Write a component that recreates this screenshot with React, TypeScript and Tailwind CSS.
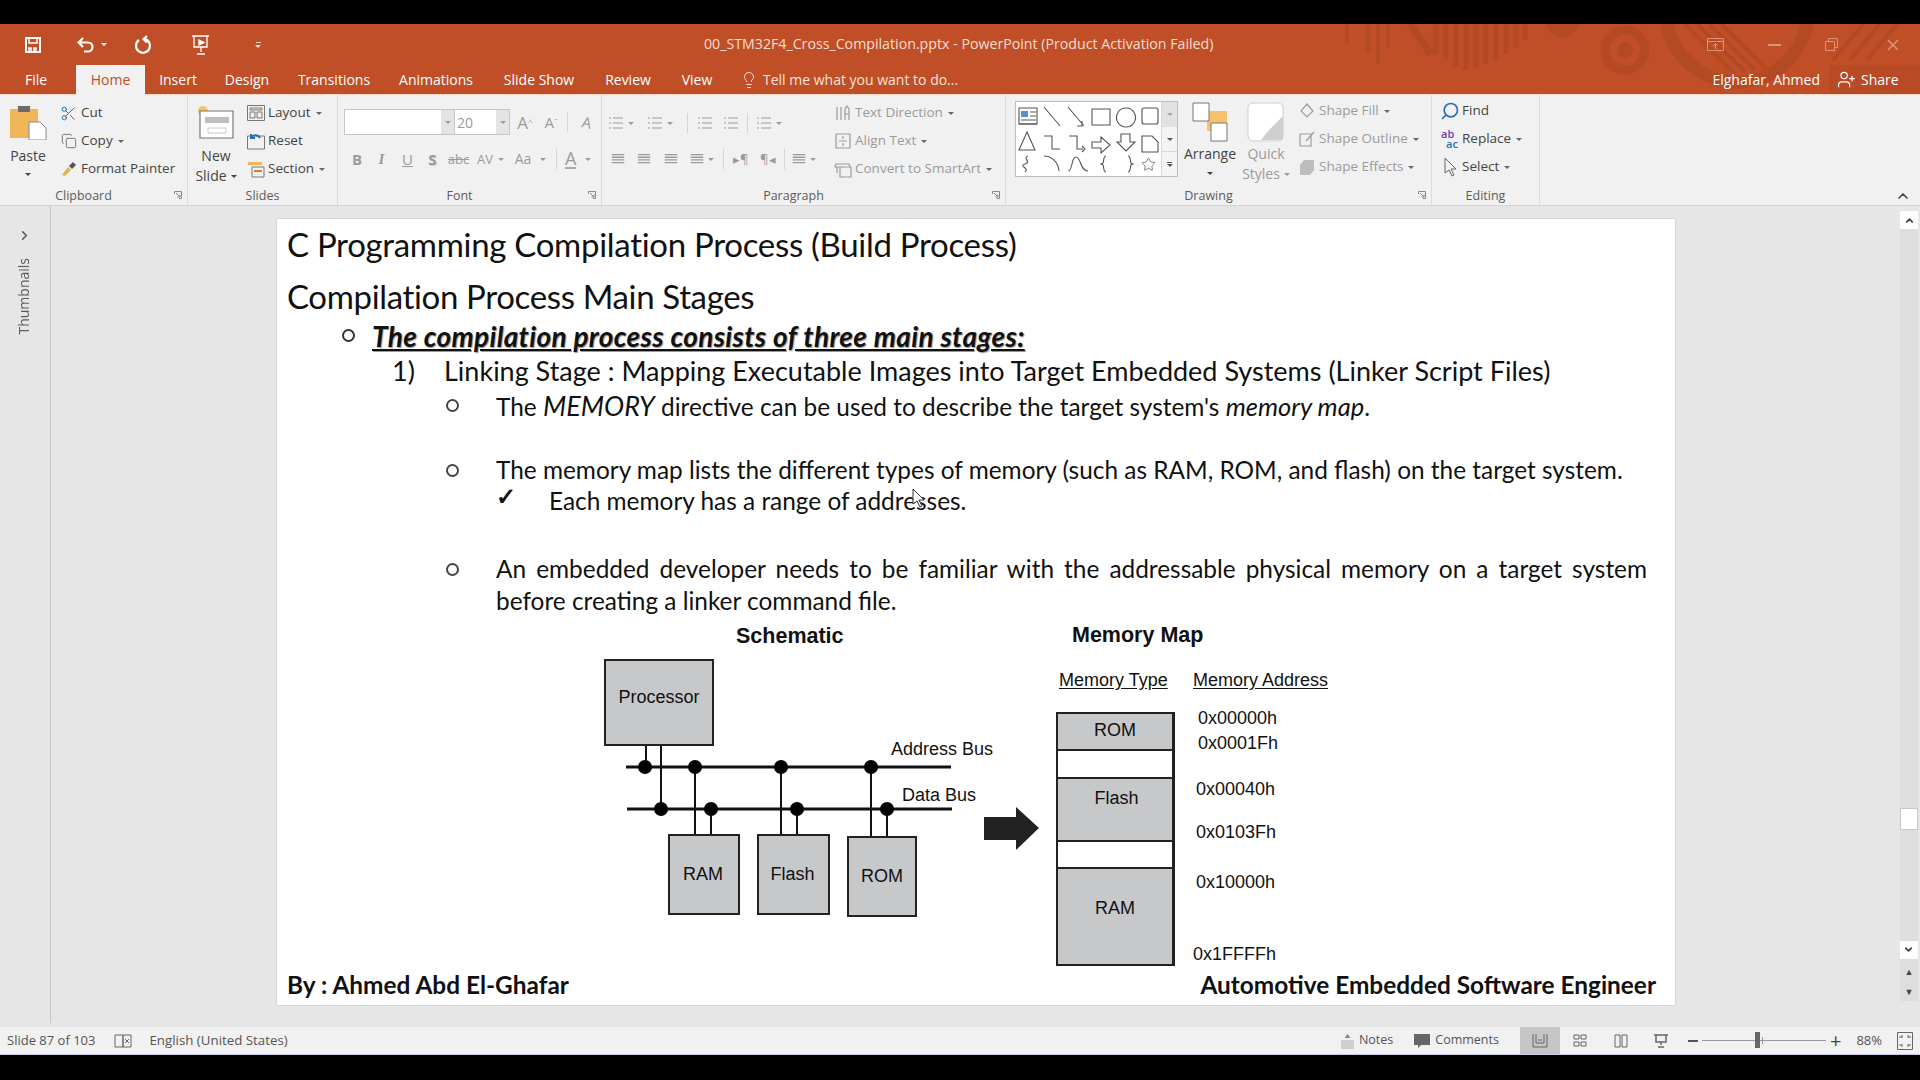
import { ChevronRight, ChevronUp, Copy, Lightbulb, Scissors, Search, Star, UserPlus, X } from 'lucide-react';
import type { ReactNode } from 'react';

function Caret({ className = '' }: { className?: string }) {
  return <span className={`inline-block w-0 h-0 border-x-[3px] border-x-transparent border-t-[3px] border-t-current ${className}`} />;
}

function Launcher() {
  return (
    <svg width="8" height="8" viewBox="0 0 8 8" fill="none" stroke="#8a8a8a" className="absolute right-[5px] bottom-[6px]">
      <path d="M.5 3V.5H7.500V7.500H5M2 2l4 4M6 3.500V6H3.500" />
    </svg>
  );
}

function Group({ w, label, launcher, children }: { w: string; label: string; launcher?: boolean; children: ReactNode }) {
  return (
    <div className={`${w} relative flex flex-col h-full border-r border-[#dcdcdc] shrink-0`}>
      <div className="flex-1 flex min-h-0">{children}</div>
      <div className={`h-[21px] pt-[4px] flex items-center justify-center text-[#5c5c5c] text-[12.500px] leading-none ${launcher ? 'pr-[20px]' : ''}`}>{label}</div>
      {launcher && <Launcher />}
    </div>
  );
}

function SmallRow({ icon, text, dim, caret }: { icon: ReactNode; text: string; dim?: boolean; caret?: boolean }) {
  return (
    <div className={`h-[28px] flex items-center whitespace-nowrap text-[13.500px] leading-none ${dim ? 'text-[#9b9b9b]' : 'text-[#444]'}`}>
      <span className="w-[25px] flex justify-center shrink-0">{icon}</span>
      <span>{text}</span>
      {caret && <Caret className="ml-[5px] text-[#666]" />}
    </div>
  );
}

function Stroke({ children, size = 18, c = '#9b9b9b' }: { children: ReactNode; size?: number; c?: string }) {
  return (
    <svg width={size} height={size} viewBox="0 0 18 18" fill="none" stroke={c} strokeWidth="1.200">
      {children}
    </svg>
  );
}

function TitleBar() {
  return (
    <div className="relative h-[41px] flex items-center">
      <div className="relative ml-[24px] flex items-center text-white">
        <svg width="18" height="18" viewBox="0 0 18 18" fill="none" stroke="white" strokeWidth="2">
          <path d="M2 2h14v14H2z" />
          <path d="M5 2v5h8V2M5 16v-4h2v4M10 16v-4h2v4" strokeWidth="1.500" />
        </svg>
        <svg width="20" height="20" viewBox="0 0 20 20" fill="none" stroke="white" strokeWidth="2.200" className="ml-[34px]">
          <path d="M7 3L2.500 7.500 7 12M3 7.500h9a4.500 4.500 0 0 1 0 9H8" />
        </svg>
        <Caret className="ml-[5px]" />
        <svg width="20" height="20" viewBox="0 0 20 20" fill="none" stroke="white" strokeWidth="2.200" className="ml-[26px]">
          <path d="M6 5a7 7 0 1 0 5-1.200M14 1l-3.500 3L14 7.500" />
        </svg>
        <svg width="22" height="22" viewBox="0 0 22 22" fill="none" stroke="white" strokeWidth="1.300" className="ml-[37px]">
          <path d="M2 2h17M4 2v11h13V2M11 13v5M7 20h8" />
          <path d="M9 6v5l5-2.500z" fill="white" />
        </svg>
        <span className="ml-[43px] flex flex-col items-center opacity-80">
          <span className="w-[5px] h-px bg-white" />
          <Caret className="mt-[2px]" />
        </span>
      </div>
      <div className="absolute left-[704px] top-[13px] text-[14.200px] leading-none text-[#f6ddd2] whitespace-nowrap">
        00_STM32F4_Cross_Compilation.pptx - PowerPoint (Product Activation Failed)
      </div>
      <div className="absolute right-0 top-0 h-full flex items-center opacity-50 text-[#f5d9cc]">
        <svg width="17" height="13" viewBox="0 0 17 13" fill="none" stroke="currentColor" className="mr-[44px]">
          <path d="M.5.500h16v12H.5zM.5 3.500h16M8.500 11V6M6 8l2.500-2.500L11 8" />
        </svg>
        <span className="w-[13px] h-[2px] bg-current mr-[44px]" />
        <svg width="13" height="13" viewBox="0 0 13 13" fill="none" stroke="currentColor" className="mr-[46px]">
          <path d="M.5 3.500h9v9h-9zM3.500 3.500v-3h9v9h-3" />
        </svg>
        <X size={18} className="mr-[18px]" />
      </div>
    </div>
  );
}

function Tabs() {
  const tabs: [string, string][] = [
    ['Insert', 'w-[66px]'],
    ['Design', 'w-[72px]'],
    ['Transitions', 'w-[102px]'],
    ['Animations', 'w-[102px]'],
    ['Slide Show', 'w-[104px]'],
    ['Review', 'w-[74px]'],
    ['View', 'w-[64px]'],
  ];
  return (
    <div className="relative h-[30px] flex items-end border-b border-[#f3d7c9] text-white text-[14px] leading-none whitespace-nowrap">
      <div className="w-[76px] h-[29px] pr-[4px] flex items-center justify-center">File</div>
      <div className="w-[69px] h-[30px] -mb-px bg-[#f1f1f1] flex items-center justify-center text-[#c04f27]">Home</div>
      {tabs.map(([t, w]) => (
        <div key={t} className={`${w} h-[29px] flex items-center justify-center`}>{t}</div>
      ))}
      <div className="h-[29px] flex items-center ml-[11px] text-[#f8e3da]">
        <Lightbulb size={18} strokeWidth={1.300} />
        <span className="ml-[5px]">Tell me what you want to do...</span>
      </div>
      <div className="ml-auto h-[29px] flex items-center">
        <span className="mr-[9px]">Elghafar, Ahmed</span>
        <div className="w-[91px] h-[29px] bg-[#b84b25] flex items-center pl-[8px]">
          <UserPlus size={19} strokeWidth={1.500} />
          <span className="ml-[5px]">Share</span>
        </div>
      </div>
    </div>
  );
}

function HeaderArt() {
  return (
    <svg width="620" height="70" viewBox="0 0 620 70" className="absolute right-0 top-0" fill="none" stroke="#b34a24">
      <path d="M47 0v20M68 0v28M78 0v40M88 0v24" strokeWidth="4" />
      <path d="M110 0l21 30" strokeWidth="8" />
      <path d="M136 0v30M146 0v36M156 0v42M166 0v46M176 0v44M186 0v40M196 0v36M206 0v30M216 0v24M225 0v16" strokeWidth="5" />
      <circle cx="262" cy="-4" r="17" fill="#b34a24" stroke="none" />
      <circle cx="325" cy="26" r="20" strokeWidth="9" />
      <circle cx="325" cy="26" r="8" fill="#b34a24" stroke="none" />
      <circle cx="437" cy="-13" r="71" strokeWidth="13" />
      <path d="M385 0l50 50M397 0l48 48M409 0l46 46M421 0l44 44M533 36l30-36M550 36l30-36M567 36l30-36" strokeWidth="4" />
    </svg>
  );
}

function FontButtons() {
  return (
    <div className="pl-[6px] pt-[14px] text-[#9b9b9b]">
      <div className="flex items-center h-[26px]">
        <div className="w-[111px] h-[26px] bg-white border border-[#c6c6c6] flex justify-end">
          <span className="w-[13px] bg-[#e4e4e4] flex items-center justify-center"><Caret /></span>
        </div>
        <div className="w-[55px] h-[26px] bg-white border border-l-0 border-[#c6c6c6] flex items-center justify-between text-[14px] pl-[2px]">
          20
          <span className="w-[13px] h-full bg-[#e4e4e4] flex items-center justify-center"><Caret /></span>
        </div>
        <span className="ml-[2px] w-[26px] text-center text-[17px] leading-none">A<sup className="text-[8px]">^</sup></span>
        <span className="w-[26px] text-center text-[15px] leading-none">A<sup className="text-[8px]">ˇ</sup></span>
        <span className="w-px h-[20px] bg-[#d4d4d4] ml-[3px]" />
        <span className="ml-[14px] text-[15px] leading-none rotate-12">A</span>
      </div>
      <div className="flex items-center h-[26px] mt-[11px] text-[15px] leading-none">
        <span className="w-[22px] ml-[2px] text-center font-bold">B</span>
        <span className="w-[27px] text-center italic font-bold font-['Liberation_Serif']">I</span>
        <span className="w-[25px] text-center underline">U</span>
        <span className="w-[25px] text-center font-bold [text-shadow:1px_1px_0_#ccc]">S</span>
        <span className="w-[27px] text-center line-through text-[13px]">abc</span>
        <span className="w-[26px] text-center text-[13px]">AV</span>
        <Caret />
        <span className="w-[34px] ml-[2px] text-center text-[14px]">Aa</span>
        <Caret />
        <span className="w-px h-[20px] bg-[#d4d4d4] ml-[10px]" />
        <span className="ml-[8px] text-[18px] border-b-2 border-[#aaa]">A</span>
        <Caret className="ml-[9px]" />
      </div>
    </div>
  );
}

function ListIcon() {
  return (
    <Stroke>
      <path d="M2 4h2M2 9h2M2 14h2M6 4h10M6 9h10M6 14h10" />
    </Stroke>
  );
}

function AlignIcon() {
  return (
    <Stroke size={16}>
      <path d="M2 4h14M2 7h14M2 10h14M2 13h14" strokeWidth="1.500" />
    </Stroke>
  );
}

function ParagraphGroup() {
  return (
    <div className="flex">
      <div className="w-[228px] pt-[16px] pl-[5px]">
        <div className="flex items-center h-[24px] text-[#9b9b9b]">
          <ListIcon />
          <Caret className="ml-[3px] mr-[12px]" />
          <ListIcon />
          <Caret className="ml-[3px] mr-[14px]" />
          <span className="w-px h-[20px] bg-[#d4d4d4] mr-[8px]" />
          <ListIcon />
          <span className="w-[8px]" />
          <ListIcon />
          <span className="w-px h-[20px] bg-[#d4d4d4] mx-[7px]" />
          <ListIcon />
          <Caret className="ml-[3px]" />
        </div>
        <div className="flex items-center h-[24px] mt-[12px] ml-[3px] text-[#9b9b9b]">
          <span className="w-[26px]"><AlignIcon /></span>
          <span className="w-[27px]"><AlignIcon /></span>
          <span className="w-[26px]"><AlignIcon /></span>
          <AlignIcon />
          <Caret className="ml-[3px]" />
          <span className="w-px h-[20px] bg-[#d4d4d4] mx-[9px]" />
          <span className="w-[27px] text-[13px] leading-none">▸¶</span>
          <span className="w-[24px] text-[13px] leading-none">¶◂</span>
          <span className="w-px h-[20px] bg-[#d4d4d4] mr-[6px]" />
          <AlignIcon />
          <Caret className="ml-[3px]" />
        </div>
      </div>
      <div className="pt-[4px]">
        <SmallRow
          dim
          caret
          text="Text Direction"
          icon={<Stroke><path d="M3 16V3M7 16V3M15 16V5l-2-3-2 3v11M11 10h4" /></Stroke>}
        />
        <SmallRow
          dim
          caret
          text="Align Text"
          icon={<Stroke><path d="M2 2h14v14H2zM5 9h8M9 4v3M9 14v-3" /></Stroke>}
        />
        <SmallRow
          dim
          caret
          text="Convert to SmartArt"
          icon={<Stroke><path d="M6 7h11v10H6zM2 4h13l1 3H1zM3 7v6" /></Stroke>}
        />
      </div>
    </div>
  );
}

function ShapesGallery() {
  const s = '#555';
  return (
    <div className="ml-[9px] mt-[6px] w-[163px] h-[76px] shrink-0 flex border border-[#bdbdbd] bg-white">
      <svg width="145" height="74" viewBox="0 0 145 74" fill="none" stroke={s} strokeWidth="1.100" className="shrink-0">
        <path d="M3 6h18v16H3z" />
        <path d="M5 9h7v6H5z" fill="#5b8bd0" stroke="none" />
        <path d="M14 10h6M14 14h6M5 18h15M3 22h18" />
        <path d="M28 5l16 19M52 5l16 19M66 19v5h-5" />
        <path d="M76 7h18v16H76zM110 6a9.500 9.500 0 1 0 .01 0zM126 8a2 2 0 0 1 2-2h12a2 2 0 0 1 2 2v12a2 2 0 0 1-2 2h-12a2 2 0 0 1-2-2z" />
        <path d="M11 30l8 18H3zM28 34h8v13h8M53 34h8v13h6M66 44l3 3-3 3" />
        <path d="M76 40h9v-5l9 8-9 8v-5h-9zM105 32h9v8h5l-9 9-9-9h4zM126 34h10l6 6v10h-16z" />
        <path d="M12 54c-6 2 4 6-3 8s5 4 0 8M28 54c8 0 14 6 15 15M52 69c5 0 3-14 8-14s4 14 12 14" />
        <path d="M90 54c-3 0-2 6-3 7l-2 1 2 1c1 1 0 7 3 7M112 54c3 0 2 6 3 7l2 1-2 1c-1 1 0 7-3 7" />
      </svg>
      <div className="relative flex-1 flex flex-col border-l border-[#d8d8d8] bg-[#f4f4f4] text-[#555]">
        <Star size={15} strokeWidth={1.200} className="absolute -left-[21px] top-[55px]" />
        <span className="h-[25px] bg-[#e2e2e2] flex items-center justify-center text-[#aaa]"><Caret /></span>
        <span className="h-[25px] flex items-center justify-center border-b border-[#d8d8d8]"><Caret /></span>
        <span className="flex-1 flex flex-col items-center justify-center"><span className="w-[5px] h-px bg-current mb-px" /><Caret /></span>
      </div>
    </div>
  );
}

function Ribbon() {
  return (
    <div className="h-[110px] flex bg-[#f1f1f1] text-[#444]">
      <Group w="w-[188px]" label="Clipboard" launcher>
        <div className="w-[56px] flex flex-col items-center pt-[9px]">
          <svg width="38" height="36" viewBox="0 0 38 36">
            <path d="M1 5h28v29H1z" fill="#f2b65a" />
            <path d="M9 2h12v6H9z" fill="#6a6a6a" />
            <path d="M20 18h11l6 6v12H20z" fill="#fff" stroke="#8a8a8a" />
          </svg>
          <span className="text-[14px] leading-none mt-[9px]">Paste</span>
          <Caret className="mt-[10px]" />
        </div>
        <div className="pt-[4px]">
          <SmallRow text="Cut" icon={<Scissors size={17} strokeWidth={1.400} className="text-[#2b6fb5]" />} />
          <SmallRow text="Copy" caret icon={<Copy size={16} strokeWidth={1.300} className="text-[#666]" />} />
          <SmallRow text="Format Painter" icon={<svg width="16" height="16" viewBox="0 0 16 16"><path d="M1 14l6-8 3 3-6 6z" fill="#e8b04f" /><path d="M8 5l4-4 3 3-4 4z" fill="#555" /></svg>} />
        </div>
      </Group>
      <Group w="w-[150px]" label="Slides">
        <div className="w-[54px] ml-[1px] flex flex-col items-center pt-[9px]">
          <svg width="38" height="36" viewBox="0 0 38 36" fill="none">
            <circle cx="6" cy="7" r="5" fill="#f5c565" />
            <path d="M3 7h33v27H3z" fill="#fff" stroke="#777" strokeWidth="1.200" />
            <path d="M8 13h24v6H8z" fill="#bdbdbd" />
            <path d="M11 24h18v5H11z" stroke="#c8c8c8" />
          </svg>
          <span className="text-[14px] leading-none mt-[9px]">New</span>
          <span className="text-[14px] leading-none mt-[6px] flex items-center">Slide<Caret className="ml-[4px]" /></span>
        </div>
        <div className="pt-[4px]">
          <SmallRow text="Layout" caret icon={<svg width="20" height="18" viewBox="0 0 20 18" fill="none" stroke="#777"><path d="M1.500 1.500h17v15h-17zM4 4h12v2H4zM4 8h5v6H4zM11 8h5v6h-5z" /></svg>} />
          <SmallRow text="Reset" icon={<svg width="20" height="18" viewBox="0 0 20 18" fill="none"><path d="M1.500 4h17v13h-17z" stroke="#777" /><path d="M5 6a5 5 0 0 1 9 0M5 2v4h4" stroke="#2b6fb5" strokeWidth="2" /></svg>} />
          <SmallRow text="Section" caret icon={<svg width="20" height="18" viewBox="0 0 20 18" fill="none"><path d="M2 2h14v3H2z" fill="#f2b65a" /><path d="M6 7h12v10H6z" stroke="#777" /><path d="M8 11h8" stroke="#d9783a" strokeWidth="2" /></svg>} />
        </div>
      </Group>
      <Group w="w-[264px]" label="Font" launcher>
        <FontButtons />
      </Group>
      <Group w="w-[404px]" label="Paragraph" launcher>
        <ParagraphGroup />
      </Group>
      <Group w="w-[426px]" label="Drawing" launcher>
        <ShapesGallery />
        <div className="w-[58px] ml-[3px] shrink-0 flex flex-col items-center pt-[6px]">
          <svg width="38" height="42" viewBox="0 0 38 42">
            <path d="M16 10h20v20H16z" fill="#f4c26f" />
            <path d="M2 2h16v18H2z" fill="#fff" stroke="#777" />
            <path d="M20 22h16v18H20z" fill="#fff" stroke="#777" />
          </svg>
          <span className="text-[14px] leading-none text-[#444] mt-[4px]">Arrange</span>
          <Caret className="mt-[11px]" />
        </div>
        <div className="w-[54px] shrink-0 flex flex-col items-center pt-[7px] text-[#9b9b9b]">
          <svg width="38" height="41" viewBox="0 0 38 41">
            <rect x="1" y="1" width="35" height="38" rx="5" fill="#fff" stroke="#cfcfcf" />
            <path d="M14 38l8-10 6-6 8-8v24z" fill="#cfcfcf" />
          </svg>
          <span className="text-[14px] leading-none mt-[4px]">Quick</span>
          <span className="text-[14px] leading-none mt-[6px] flex items-center">Styles<Caret className="ml-[4px]" /></span>
        </div>
        <div className="ml-[1px] pt-[2px] shrink-0">
          <SmallRow dim caret text="Shape Fill" icon={<Stroke><path d="M9 2l6 7-6 6-6-6z" /></Stroke>} />
          <SmallRow dim caret text="Shape Outline" icon={<Stroke><path d="M2 4h11v12H2zM8 11l8-9" /></Stroke>} />
          <SmallRow dim caret text="Shape Effects" icon={<svg width="18" height="18" viewBox="0 0 18 18"><path d="M2 7l4-5h10v10l-4 5H2z" fill="#bdbdbd" /></svg>} />
        </div>
      </Group>
      <Group w="w-[108px]" label="Editing">
        <div className="ml-[5px] pt-[2px]">
          <SmallRow text="Find" icon={<Search size={20} strokeWidth={2} className="text-[#2b6fb5] -scale-x-100" />} />
          <SmallRow
            text="Replace"
            caret
            icon={
              <span className="flex flex-col text-[11px] leading-[10px] font-semibold">
                <span className="text-[#6f3fa8]">ab</span>
                <span className="text-[#2b6fb5] ml-[5px]">ac</span>
              </span>
            }
          />
          <SmallRow text="Select" caret icon={<svg width="14" height="20" viewBox="0 0 14 20" fill="none" stroke="#666"><path d="M2 1v15l4-3 3 6 2-1-3-6h5z" /></svg>} />
        </div>
      </Group>
      <div className="flex-1 flex items-end justify-end pr-[9px] pb-[1px] text-[#444]">
        <ChevronUp size={16} strokeWidth={2.500} />
      </div>
    </div>
  );
}

function Box({ className, children }: { className: string; children: string }) {
  return (
    <div className={`absolute bg-[#c7c8ca] border-2 border-[#222] flex items-center justify-center ${className}`}>
      {children}
    </div>
  );
}

function Diagram() {
  return (
    <div className="relative ml-[303px] mt-[3px] w-[780px] h-[352px] font-['Liberation_Sans',sans-serif] text-[18px] leading-none text-[#111] whitespace-nowrap">
      <div className="absolute left-[156px] top-[6px] text-[21.500px] font-bold">Schematic</div>
      <div className="absolute left-[492px] top-[5px] text-[21.500px] font-bold">Memory Map</div>
      <svg width="780" height="355" viewBox="0 0 780 355" className="absolute left-0 top-0" fill="none" stroke="#111">
        <path d="M46 147h325M47 189h325" strokeWidth="3" />
        <path d="M66 126v21M81 126v63M115 147v67M131 189v25M201 147v67M217 189v25M291 147v69M307 189v27" strokeWidth="2" />
        <g fill="#000" stroke="none">
          <circle cx="65" cy="147" r="7" />
          <circle cx="115" cy="147" r="7" />
          <circle cx="201" cy="147" r="7" />
          <circle cx="291" cy="147" r="7" />
          <circle cx="81" cy="189" r="7" />
          <circle cx="131" cy="189" r="7" />
          <circle cx="217" cy="189" r="7" />
          <circle cx="307" cy="189" r="7" />
          <path d="M404 197h32v-10l23 21-23 22v-10h-32z" fill="#222" />
        </g>
      </svg>
      <Box className="left-[24px] top-[39px] w-[110px] h-[87px] pb-[12px]">Processor</Box>
      <Box className="left-[88px] top-[214px] w-[72px] h-[81px] pb-[2px] pr-[2px]">RAM</Box>
      <Box className="left-[177px] top-[214px] w-[73px] h-[81px] pb-[2px] pr-[2px]">Flash</Box>
      <Box className="left-[267px] top-[216px] w-[70px] h-[81px] pb-[2px]">ROM</Box>
      <div className="absolute left-[311px] top-[120px]">Address Bus</div>
      <div className="absolute left-[322px] top-[166px]">Data Bus</div>

      <div className="absolute left-[479px] top-[51px] underline underline-offset-2">Memory Type</div>
      <div className="absolute left-[613px] top-[51px] underline underline-offset-2">Memory Address</div>
      <div className="absolute left-[476px] top-[92px] w-[119px] h-[254px] flex flex-col border-2 border-r-[3px] border-[#222]">
        <div className="h-[37px] pb-[3px] bg-[#c7c8ca] border-b-2 border-[#222] flex items-center justify-center">ROM</div>
        <div className="h-[28px] bg-white border-b-2 border-[#222]" />
        <div className="h-[63px] bg-[#c7c8ca] border-b-2 border-[#222] flex justify-center pt-[10px] pl-[3px]">Flash</div>
        <div className="h-[27px] bg-white border-b-2 border-[#222]" />
        <div className="flex-1 bg-[#c7c8ca] flex justify-center pt-[30px]">RAM</div>
      </div>
      <div className="absolute left-[618px] top-[89px]">0x00000h</div>
      <div className="absolute left-[618px] top-[114px]">0x0001Fh</div>
      <div className="absolute left-[616px] top-[160px]">0x00040h</div>
      <div className="absolute left-[616px] top-[203px]">0x0103Fh</div>
      <div className="absolute left-[616px] top-[253px]">0x10000h</div>
      <div className="absolute left-[613px] top-[325px]">0x1FFFFh</div>
    </div>
  );
}

function Slide() {
  return (
    <div className="relative w-[1400px] h-[788px] bg-white border border-[#d8d8d8] font-['Lato',sans-serif] text-[#111] whitespace-nowrap overflow-hidden">
      <div className="pl-[10px] pt-[3px]">
        <div className="h-[44px] text-[33px] leading-[44px] tracking-[-0.3px]">C Programming Compilation Process (Build Process)</div>
        <div className="h-[50px] mt-[5px] text-[33px] leading-[50px] tracking-[-0.35px]">Compilation Process Main Stages</div>
      </div>
      <div className="pl-[65px] h-[29px] flex items-center text-[28px] leading-none">
        <span className="w-[13px] h-[13px] rounded-full border-2 border-[#333] mr-[17px]" />
        <span className="font-bold italic underline tracking-[0.35px] [text-shadow:1px_1px_1px_#999]">The compilation process consists of three main stages:</span>
      </div>
      <div className="h-[40px] pl-[115px] flex items-center text-[27px] leading-none">
        <span className="w-[52px]">1)</span>
        <span>Linking Stage : Mapping Executable Images into Target Embedded Systems (Linker Script Files)</span>
      </div>
      <div className="pl-[169px] text-[24.400px] leading-none">
        <div className="h-[31px] flex items-center">
          <span className="w-[13px] h-[13px] rounded-full border-2 border-[#444] mr-[37px]" />
          <span>The <em className="text-[27px]">MEMORY</em> directive can be used to describe the target system's <em className="text-[25.500px]">memory map</em>.</span>
        </div>
        <div className="h-[32px] mt-[33px] flex items-center">
          <span className="w-[13px] h-[13px] rounded-full border-2 border-[#444] mr-[37px]" />
          <span>The memory map lists the different types of memory (such as RAM, ROM, and flash) on the target system.</span>
        </div>
        <div className="h-[30px] ml-[50px] flex items-center">
          <span className="w-[53px] text-[24px] font-bold pb-[10px]">✓</span>
          <span>Each memory has a range of addresses.</span>
        </div>
        <div className="h-[32px] mt-[37px] flex items-center">
          <span className="w-[13px] h-[13px] rounded-full border-2 border-[#444] mr-[37px]" />
          <span className="w-[1151px] [text-align-last:justify] whitespace-normal">An embedded developer needs to be familiar with the addressable physical memory on a target system</span>
        </div>
        <div className="h-[32px] ml-[50px] flex items-center">before creating a linker command file.</div>
      </div>
      <Diagram />
      <div className="pl-[10px] pr-[19px] h-[26px] flex items-center justify-between text-[24.400px] font-bold leading-none">
        <span>By : Ahmed Abd El-Ghafar</span>
        <span>Automotive Embedded Software Engineer</span>
      </div>
      <svg width="14" height="20" viewBox="0 0 14 20" fill="#fff" stroke="#333" className="absolute left-[635px] top-[269px]">
        <path d="M1 1v15l4-3 3 6 2-1-3-6h5z" />
      </svg>
    </div>
  );
}

function Canvas() {
  return (
    <div className="h-[823px] flex bg-[#e6e6e6] border-t border-[#d4d4d4]">
      <div className="w-[51px] h-[817px] border-r border-[#c6c6c6] flex flex-col items-center pt-[22px] pr-[2px] text-[#555]">
        <ChevronRight size={15} strokeWidth={2.500} />
        <span className="mt-[15px] text-[14px] leading-none [writing-mode:vertical-rl] rotate-180 text-[#5c5c5c]">Thumbnails</span>
      </div>
      <div className="w-[225px]" />
      <div className="pt-[12px]"><Slide /></div>
      <div className="ml-auto mr-[2px] w-[18px] mt-[5px] flex flex-col items-center bg-[#dedede] h-[790px] text-[#444]">
        <span className="w-full h-[18px] bg-white flex items-center justify-center"><ChevronUp size={11} strokeWidth={4} /></span>
        <span className="w-full h-[22px] mt-[579px] bg-white border border-[#c8c8c8]" />
        <span className="w-full h-[18px] mt-[111px] bg-white flex items-center justify-center rotate-180"><ChevronUp size={11} strokeWidth={4} /></span>
        <span className="mt-[8px] text-[9px] leading-none">▲</span>
        <span className="mt-[11px] text-[9px] leading-none">▼</span>
      </div>
    </div>
  );
}

function StatusBar() {
  return (
    <div className="h-[28px] -mt-[1px] flex items-center bg-[#f1f1f1] border-b border-[#c8c8e0] text-[#555] text-[13px] leading-none whitespace-nowrap">
      <span className="ml-[7px]">Slide 87 of 103</span>
      <svg width="18" height="14" viewBox="0 0 18 14" fill="none" stroke="#666" className="ml-[19px]">
        <path d="M1 1h8v12H1zM9 1h8v12H9zM11 5l4 4M15 5l-4 4" />
      </svg>
      <span className="ml-[17px] text-[13.300px]">English (United States)</span>
      <div className="ml-auto flex items-center h-full">
        <svg width="15" height="16" viewBox="0 0 15 16" className="mr-[4px]">
          <path d="M1 7h13v9H1z" fill="#cfcfcf" />
          <path d="M7.500 1l3 4h-6z" fill="#888" />
        </svg>
        <span className="text-[12.500px]">Notes</span>
        <svg width="16" height="16" viewBox="0 0 16 16" className="ml-[21px] mr-[5px]">
          <path d="M0 1h16v11H7l-3 3v-3H0z" fill="#666" />
        </svg>
        <span className="text-[12.500px]">Comments</span>
        <span className="ml-[21px] w-[40px] h-full bg-[#c6c6c6] flex items-center justify-center">
          <svg width="16" height="14" viewBox="0 0 16 14" fill="none" stroke="#666"><path d="M1 0v13h14V0M4 0v9h8V0M6 6h4" /></svg>
        </span>
        <svg width="14" height="14" viewBox="0 0 14 14" fill="none" stroke="#666" className="ml-[13px]"><path d="M1 1h5v4H1zM8 1h5v4H8zM1 8h5v4H1zM8 8h5v4H8z" /></svg>
        <svg width="14" height="14" viewBox="0 0 14 14" fill="none" stroke="#666" className="ml-[27px]"><path d="M1 1h5v12H1zM8 1h5v12H8z" /></svg>
        <svg width="14" height="14" viewBox="0 0 14 14" fill="none" stroke="#666" className="ml-[26px]"><path d="M0 1h14M2 1v7h10V1M7 8v3M4 13h6" strokeWidth="1.500" /></svg>
        <span className="ml-[20px] w-[10px] h-[2px] bg-[#555]" />
        <div className="relative ml-[4px] w-[124px] h-px bg-[#999]">
          <span className="absolute left-[53px] -top-[8px] w-[5px] h-[16px] bg-[#666]" />
          <span className="absolute left-[60px] -top-[3px] w-px h-[7px] bg-[#999]" />
        </div>
        <span className="ml-[4px] text-[20px] text-[#444]">+</span>
        <span className="ml-[15px]">88%</span>
        <svg width="16" height="18" viewBox="0 0 16 18" fill="none" stroke="#666" className="ml-[15px] mr-[7px]">
          <path d="M.5.500h15v17H.5zM5 5H2M11 5h3M5 13H2M11 13h3M5 3v3M11 3v3M5 12v3M11 12v3" />
        </svg>
      </div>
    </div>
  );
}

export default function App() {
  return (
    <div className="w-[1920px] h-[1080px] bg-black pt-[24px] overflow-hidden font-['Open_Sans',sans-serif]">
      <div className="relative bg-[#c04f27]">
        <HeaderArt />
        <TitleBar />
        <Tabs />
      </div>
      <Ribbon />
      <Canvas />
      <StatusBar />
    </div>
  );
}
